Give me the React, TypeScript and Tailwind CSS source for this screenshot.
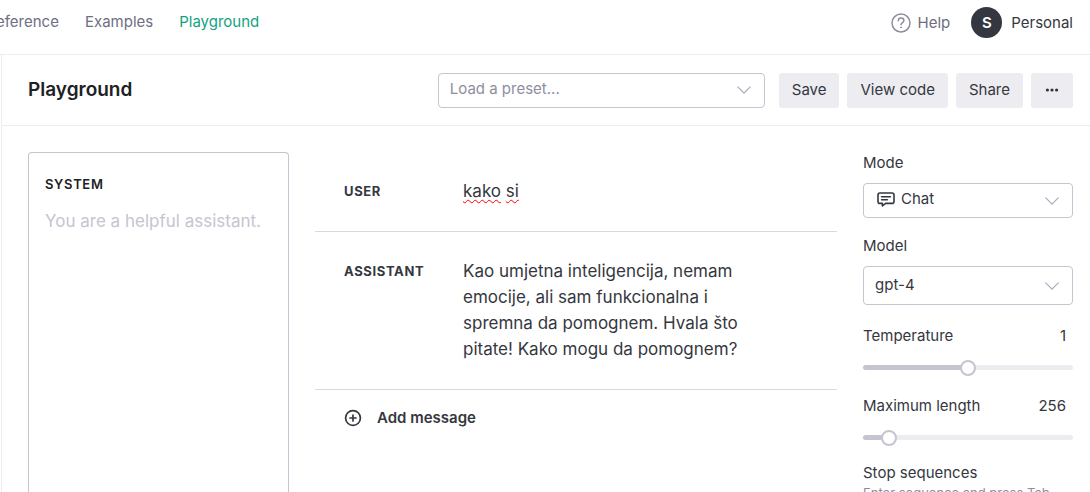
import { useState } from 'react';
import type { ReactNode, SelectHTMLAttributes } from 'react';
import clsx from 'clsx';

const navItems = [
  { label: 'eference', title: 'API reference', active: false },
  { label: 'Examples', title: 'Examples', active: false },
  { label: 'Playground', title: 'Playground', active: true },
];

function ChevronIcon() {
  return (
    <svg
      className="pointer-events-none absolute right-[14px] top-1/2 -translate-y-1/2 text-[#acacbe]"
      width="14"
      height="8"
      viewBox="0 0 14 8"
      fill="none"
      stroke="currentColor"
      strokeWidth="1.3"
      strokeLinecap="round"
      strokeLinejoin="round"
    >
      <path d="M0.8 0.9 7 7.1l6.2-6.2" />
    </svg>
  );
}

function HelpIcon() {
  return (
    <svg width="20" height="20" viewBox="0 0 20 20" fill="none" stroke="#8e8ea0" strokeWidth="1.5" strokeLinecap="round">
      <circle cx="10" cy="10" r="9" />
      <path d="M7.3 7.7c0-1.5 1.2-2.6 2.8-2.6s2.8 1 2.8 2.4c0 2.1-2.9 2-2.9 4.2" />
      <circle cx="10" cy="14.4" r="0.5" fill="#8e8ea0" strokeWidth="1" />
    </svg>
  );
}

function ChatIcon() {
  return (
    <svg
      className="pointer-events-none absolute left-[14px] top-[9px]"
      width="18"
      height="16"
      viewBox="0 0 18 16"
      fill="none"
      stroke="#353740"
      strokeWidth="1.6"
      strokeLinecap="round"
      strokeLinejoin="round"
    >
      <path d="M3 1h12a2 2 0 0 1 2 2v6.400a2 2 0 0 1-2 2H8.600L5.400 14v-2.600H3a2 2 0 0 1-2-2V3a2 2 0 0 1 2-2Z" />
      <path d="M4.600 4.700h8.800M4.600 7.700h5.800" />
    </svg>
  );
}

function AddIcon() {
  return (
    <svg width="18" height="18" viewBox="0 0 18 18" fill="none" stroke="#353740" strokeWidth="1.7" strokeLinecap="round">
      <circle cx="9" cy="9" r="7.400" />
      <path d="M9 6v6M6 9h6" />
    </svg>
  );
}

interface SelectProps extends SelectHTMLAttributes<HTMLSelectElement> {
  wrapperClassName?: string;
  icon?: ReactNode;
}

function Select({ wrapperClassName, icon, className, children, ...props }: SelectProps) {
  return (
    <div className={clsx('relative', wrapperClassName)}>
      {icon}
      <select
        className={clsx(
          'block w-full appearance-none rounded border border-[#c5c5d2] bg-transparent pr-10 text-[15px] outline-none',
          className
        )}
        {...props}
      >
        {children}
      </select>
      <ChevronIcon />
    </div>
  );
}

function Button({ children, label }: { children: ReactNode; label?: string }) {
  return (
    <button
      type="button"
      aria-label={label}
      className="flex h-[35px] items-center rounded-[3px] bg-[#ececf1] px-[13px] text-[15px] whitespace-nowrap hover:bg-[#d9d9e3]"
    >
      {children}
    </button>
  );
}

interface SliderFieldProps {
  id: string;
  label: string;
  min: number;
  max: number;
  step: number;
  initial: number;
}

function SliderField({ id, label, min, max, step, initial }: SliderFieldProps) {
  const [value, setValue] = useState(initial);
  const percent = ((value - min) / (max - min)) * 100;

  return (
    <div>
      <div className="flex items-center justify-between pr-[7px]">
        <label htmlFor={id} className="whitespace-nowrap">{label}</label>
        <input
          type="text"
          aria-label={`${label} value`}
          value={value}
          onChange={(e) => setValue(Number(e.target.value) || 0)}
          className="h-5 w-12 bg-transparent text-right outline-none"
        />
      </div>
      {/* the thumb overhangs the track by half its width at both ends */}
      <div
        className="mt-[19px] h-[5px] rounded-full"
        style={{ backgroundImage: `linear-gradient(to right, #c5c5d2 ${percent}%, #ececf1 ${percent}%)` }}
      >
        <input
          id={id}
          type="range"
          min={min}
          max={max}
          step={step}
          value={value}
          onChange={(e) => setValue(Number(e.target.value))}
          className="-mx-2 block h-[5px] w-[calc(100%+16px)] cursor-pointer appearance-none bg-transparent [&::-webkit-slider-thumb]:size-4 [&::-webkit-slider-thumb]:appearance-none [&::-webkit-slider-thumb]:rounded-full [&::-webkit-slider-thumb]:border-2 [&::-webkit-slider-thumb]:border-[#c5c5d2] [&::-webkit-slider-thumb]:bg-white"
        />
      </div>
    </div>
  );
}

function Message({ role, children }: { role: string; children: ReactNode }) {
  return (
    <div className="flex border-b border-[#d9d9e3] pt-[26px] pb-[27px] pl-[29px]">
      <button type="button" className="h-[26px] w-[119px] shrink-0 text-left text-[13px] font-bold tracking-wider">
        {role}
      </button>
      <div
        role="textbox"
        aria-label={`${role} message`}
        contentEditable
        suppressContentEditableWarning
        spellCheck={false}
        className="mr-[84px] flex-1 text-[17px] leading-[26px] outline-none"
      >
        {children}
      </div>
    </div>
  );
}

function Misspelled({ children }: { children: ReactNode }) {
  return (
    <span className="underline decoration-[#ff0000] decoration-wavy decoration-1 underline-offset-2 [text-decoration-skip-ink:none]">
      {children}
    </span>
  );
}

export default function App() {
  const [preset, setPreset] = useState('');

  return (
    <div className="flex h-screen flex-col overflow-hidden bg-white font-['Inter','Liberation_Sans',sans-serif] text-[15px] leading-5 text-[#353740]">
      <header className="flex h-[55px] shrink-0 items-start justify-between border-b border-[#ececf1] pr-[17px]">
        <nav className="-ml-1 flex gap-[26px] pt-3">
          {navItems.map((item) => (
            <a
              key={item.title}
              href="#"
              aria-label={item.title}
              className={item.active ? 'text-[#10a37f]' : 'text-[#6e6e80]'}
            >
              {item.label}
            </a>
          ))}
        </nav>
        <div className="flex items-center pt-[7px]">
          <a href="#" className="flex items-center gap-[7px] text-[#6e6e80]">
            <HelpIcon />
            Help
          </a>
          <button type="button" className="ml-[21px] flex items-center gap-[9px]">
            <span className="flex size-[31px] items-center justify-center rounded-full bg-[#353740] font-semibold text-white">
              S
            </span>
            Personal
          </button>
        </div>
      </header>

      <main className="ml-px flex min-h-0 flex-1 flex-col border-l border-[#ececf1]">
        <div className="flex h-[71px] shrink-0 items-center border-b border-[#ececf1] pr-[17px] pl-[26px]">
          <h1 className="flex-1 text-[19px] font-semibold text-[#202123]">Playground</h1>
          <Select
            aria-label="Load a preset"
            wrapperClassName="mr-[14px] w-[327px]"
            className="h-[35px] pb-[3px] pl-[11px] text-[#8e8ea0]"
            value={preset}
            onChange={(e) => setPreset(e.target.value)}
          >
            <option value="">Load a preset...</option>
          </Select>
          <div className="flex gap-2">
            <Button>Save</Button>
            <Button>View code</Button>
            <Button>Share</Button>
            <Button label="More actions">
              <svg width="16" height="4" viewBox="0 0 16 4" fill="#353740">
                <circle cx="3.400" cy="2" r="1.600" />
                <circle cx="8" cy="2" r="1.600" />
                <circle cx="12.600" cy="2" r="1.600" />
              </svg>
            </Button>
          </div>
        </div>

        <div className="grid min-h-0 flex-1 grid-cols-[1fr_2fr_210px] gap-[26px] pt-[26px] pr-[17px] pl-[26px]">
          <section className="flex flex-col rounded-t border border-b-0 border-[#c5c5d2] px-4 pt-[21px]">
            <label htmlFor="system" className="text-[13px] font-semibold tracking-wider text-[#202123]">
              SYSTEM
            </label>
            <textarea
              id="system"
              placeholder="You are a helpful assistant."
              className="mt-[14px] w-full flex-1 resize-none text-[17px] leading-[26px] outline-none placeholder:text-[#c5c5d2]"
            />
          </section>

          <section>
            <Message role="USER">
              <Misspelled>kako</Misspelled> <Misspelled>si</Misspelled>
            </Message>
            <Message role="ASSISTANT">
              Kao umjetna inteligencija, nemam emocije, ali sam funkcionalna i spremna da pomognem. Hvala što
              pitate! Kako mogu da pomognem?
            </Message>
            <button type="button" className="ml-[29px] flex items-center gap-[15px] py-[18px] font-semibold">
              <AddIcon />
              Add message
            </button>
          </section>

          <aside>
            <label htmlFor="mode" className="block pt-px">Mode</label>
            <Select id="mode" wrapperClassName="mt-[10px]" className="h-[35px] pb-[3px] pl-[37px]" icon={<ChatIcon />}>
              <option>Chat</option>
            </Select>
            <label htmlFor="model" className="mt-[18px] block">Model</label>
            <Select id="model" wrapperClassName="mt-[10px]" className="h-[39px] pb-[2px] pl-[11px]">
              <option>gpt-4</option>
            </Select>
            <div className="mt-[21px] flex flex-col gap-[26px]">
              <SliderField id="temperature" label="Temperature" min={0} max={2} step={0.01} initial={1} />
              <SliderField id="length" label="Maximum length" min={1} max={2048} step={1} initial={256} />
            </div>
            <label htmlFor="stop" className="mt-[23px] block">Stop sequences</label>
            <p className="text-[13px] text-[#8e8ea0]">Enter sequence and press Tab</p>
            <input
              id="stop"
              type="text"
              className="mt-2 h-9 w-full rounded border border-[#c5c5d2] px-3 outline-none"
            />
          </aside>
        </div>
      </main>
    </div>
  );
}
